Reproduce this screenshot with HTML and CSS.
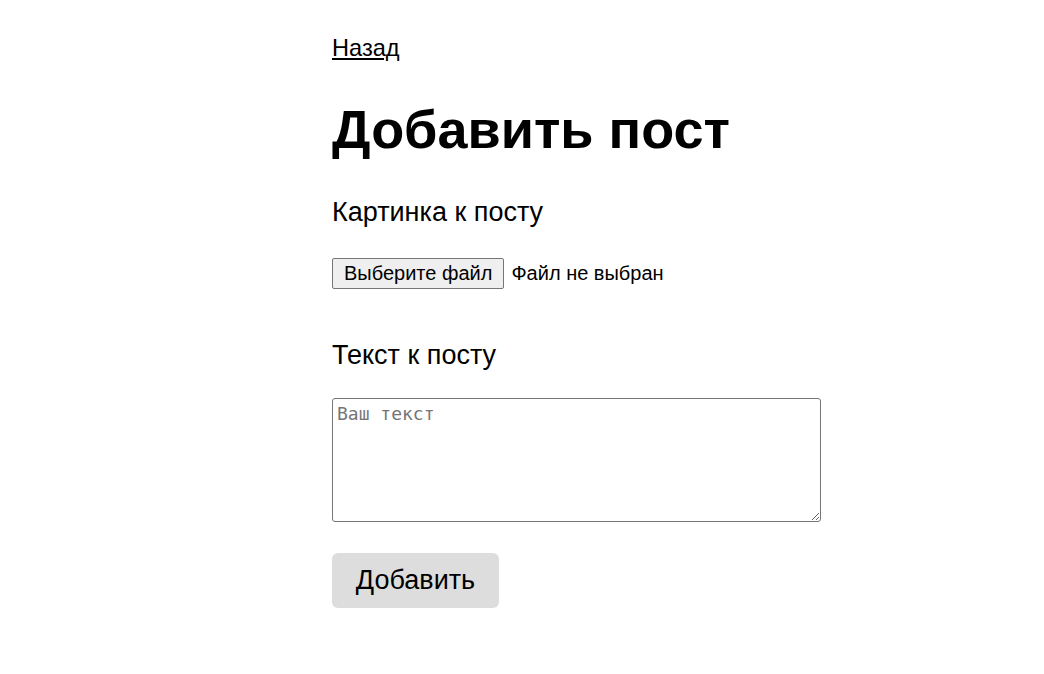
FILE: index.html
```html
<!DOCTYPE html>
<html lang="ru">
<head>
<meta charset="utf-8">
<title>Добавить пост</title>
<link rel="stylesheet" href="styles.css">
</head>
<body>
<main class="page">
  <a class="back" href="#">Назад</a>
  <h1 class="title">Добавить пост</h1>
  <form class="form">
    <label class="label" for="pic">Картинка к посту</label>
    <div class="file">
      <span class="file-btn">Выберите файл</span>
      <span class="file-name">Файл не выбран</span>
    </div>
    <label class="label label-text" for="txt">Текст к посту</label>
    <textarea id="txt" class="textarea" placeholder="Ваш текст"></textarea>
    <button type="button" class="submit">Добавить</button>
  </form>
</main>
</body>
</html>
```
FILE: styles.css
```css
html, body {
  margin: 0;
  padding: 0;
  background: #fff;
}
body {
  font-family: "Liberation Sans", Arial, sans-serif;
  color: #000;
}
.page {
  width: 489px;
  margin-left: 332px;
  padding-top: 34px;
  display: flex;
  flex-direction: column;
  align-items: flex-start;
}
.back {
  color: #000;
  font-size: 23.6px;
  line-height: 28px;
  text-decoration: underline;
}
.title {
  font-size: 54px;
  font-weight: bold;
  line-height: 62px;
  margin: 36px 0 0;
}
.form {
  display: flex;
  flex-direction: column;
  align-items: flex-start;
  width: 100%;
}
.label {
  font-size: 27px;
  line-height: 30px;
  margin-top: 37px;
}
.label-text {
  margin-top: 51px;
}
.file {
  display: flex;
  align-items: center;
  gap: 7px;
  margin-top: 31px;
  font-size: 20px;
}
.file-btn {
  box-sizing: border-box;
  height: 31px;
  padding: 0 11px;
  display: flex;
  align-items: center;
  background: #efefef;
  border: 1px solid #767676;
  border-radius: 2px;
}
.textarea {
  box-sizing: border-box;
  width: 489px;
  height: 124px;
  margin-top: 28px;
  border: 1px solid #767676;
  border-radius: 3px;
  padding: 4px 4px;
  font-family: "DejaVu Sans Mono", monospace;
  font-size: 18px;
  resize: vertical;
}
.textarea::placeholder {
  color: #757575;
}
.submit {
  margin-top: 31px;
  width: 167px;
  height: 55px;
  border: none;
  border-radius: 6px;
  background: #dddddd;
  font-family: "Liberation Sans", Arial, sans-serif;
  font-size: 27px;
  color: #000;
  padding: 0;
}
```
